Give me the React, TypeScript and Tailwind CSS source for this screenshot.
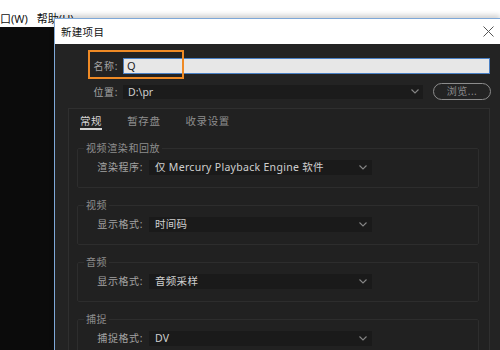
import React from "react";

const font = { fontFamily: '"Noto Sans", "Noto Sans CJK SC", sans-serif' };

function Chevron() {
  return (
    <svg width="8" height="5" viewBox="0 0 8 5" className="shrink-0">
      <polyline points="0.5,0.5 4,4 7.5,0.5" fill="none" stroke="#868686" strokeWidth="1.1" />
    </svg>
  );
}

function Select({ text, width }: { text: string; width: string }) {
  return (
    <div className={`${width} h-[15px] bg-[#1a1a1a] flex items-center justify-between pl-[6px] pr-[5px]`}>
      <span className="text-[10.5px] leading-[15px] text-[#cfcfcf] tracking-[0.3px] whitespace-nowrap">{text}</span>
      <Chevron />
    </div>
  );
}

function Group({ title, label, value }: { title: string; label: string; value: string }) {
  return (
    <fieldset className="shrink-0 ml-[8px] mr-[10px] mt-[10px] first:mt-0 border border-[#2d2d2d] rounded-[2px] pb-[12px]">
      <legend className="ml-[6px] px-[2px] text-[10px] leading-[14px] tracking-[0.6px] text-[#8e8e8e]">{title}</legend>
      <div className="mt-[5px] flex items-center">
        <div className="w-[65px] text-right text-[10px] leading-[15px] tracking-[0.6px] text-[#a3a3a3]">{label}</div>
        <div className="ml-[6px]">
          <Select text={value} width="w-[223px]" />
        </div>
      </div>
    </fieldset>
  );
}

export default function App() {
  return (
    <div className="relative w-[500px] h-[350px] overflow-hidden bg-[#0b0b0b]" style={font}>
      <div className="h-[27px] bg-white flex items-center text-[11px] leading-[14px] text-[#111] pt-[11px] whitespace-nowrap">
        <span className="ml-[-11px]">窗口(W)</span>
        <span className="ml-[9px]">帮助(H)</span>
      </div>

      <div className="absolute left-[54px] top-[18px] w-[446px] h-[332px] flex flex-col border-l border-t border-[#7ea8d8] shadow-[0_-3px_5px_rgba(0,0,0,0.18)]">
        <div className="shrink-0 h-[25px] bg-white flex items-center justify-between pl-[6px] pr-[6px]">
          <span className="text-[10.5px] leading-[14px] tracking-[0.3px] text-[#111]">新建项目</span>
          <svg width="11" height="11" viewBox="0 0 11 11">
            <path d="M0.5 0.5 L10.5 10.5 M10.5 0.5 L0.5 10.5" stroke="#555" strokeWidth="1" />
          </svg>
        </div>

        <div className="relative flex-1 min-h-0 overflow-hidden bg-[#232323] flex flex-col">
          {/* name row */}
          <div className="shrink-0 mt-[14px] flex items-center">
            <div className="w-[63px] text-right text-[10px] leading-[16px] tracking-[0.6px] text-[#a3a3a3]">名称:</div>
            <div className="ml-[5px] w-[367px] h-[16px] bg-[#e7e7e7] border border-[#4a80c4] flex items-center pl-[3px] text-[11px] text-[#222]">
              Q
            </div>
          </div>

          {/* location row */}
          <div className="shrink-0 mt-[9px] flex items-center">
            <div className="w-[63px] text-right text-[10px] leading-[16px] tracking-[0.6px] text-[#a3a3a3]">位置:</div>
            <div className="ml-[5px] w-[300px] h-[14px] bg-[#1b1b1b] flex items-center justify-between pl-[5px] pr-[4px]">
              <span className="text-[10.5px] leading-[14px] text-[#cfcfcf]">D:\pr</span>
              <Chevron />
            </div>
            <div className="ml-[10px] w-[58px] h-[17px] rounded-full border-[1.5px] border-[#8c8c8c] flex items-center justify-center text-[10px] tracking-[0.5px] text-[#8c8c8c]">
              浏览...
            </div>
          </div>

          {/* panel */}
          <div className="shrink-0 mt-[8px] ml-[13px] w-[422px] h-[300px] border border-[#2f2f2f] bg-[#212121] flex flex-col">
            <div className="shrink-0 pt-[5px] pl-[11px] flex gap-[25px] text-[10.5px] leading-[14px] tracking-[0.6px]">
              <div className="border-b-2 border-[#d4d4d4] text-[#d6d6d6]">常规</div>
              <div className="text-[#8e8e8e]">暂存盘</div>
              <div className="text-[#8e8e8e]">收录设置</div>
            </div>
            <div className="shrink-0 mt-[11px] flex flex-col">
              <Group title="视频渲染和回放" label="渲染程序:" value="仅 Mercury Playback Engine 软件" />
              <Group title="视频" label="显示格式:" value="时间码" />
              <Group title="音频" label="显示格式:" value="音频采样" />
              <Group title="捕捉" label="捕捉格式:" value="DV" />
            </div>
          </div>

          {/* highlight */}
          <div className="absolute left-[33px] top-[6px] w-[96px] h-[29px] border-2 border-[#ef8a25]" />
        </div>
      </div>
    </div>
  );
}
